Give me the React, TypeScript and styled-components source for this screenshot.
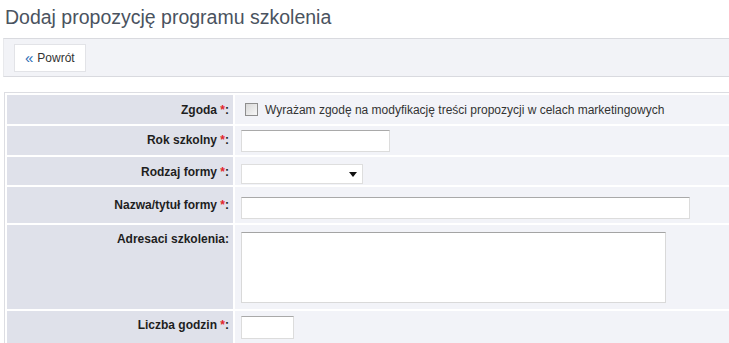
import React from 'react'
import styled, { createGlobalStyle } from 'styled-components'

const GlobalStyle = createGlobalStyle`
  html, body {
    margin: 0;
    padding: 0;
    background: #ffffff;
    overflow: hidden;
  }
  body {
    font-family: 'Liberation Sans', Arial, sans-serif;
    font-size: 12px;
    color: #222;
  }
`

const Page = styled.div`
  width: 729px;
  height: 343px;
  overflow: hidden;
`

const Title = styled.h1`
  margin: 0;
  padding: 5px 0 0 5px;
  height: 38px;
  box-sizing: border-box;
  font-size: 19.5px;
  line-height: 24px;
  font-weight: normal;
  color: #4a5360;
`

const Toolbar = styled.div`
  margin-left: 3px;
  height: 37px;
  display: flex;
  align-items: center;
  padding-left: 10px;
  background: #f2f3f7;
  border-top: 1px solid #d9dadf;
  border-bottom: 1px solid #d9dadf;
  border-left: 1px solid #e8e9ec;
`

const BackButton = styled.button`
  height: 28px;
  padding: 0 10px;
  display: flex;
  align-items: center;
  gap: 4px;
  background: #fff;
  border: 1px solid #e2e3e7;
  font-family: inherit;
  font-size: 12px;
  color: #333;
  cursor: pointer;
`

const Arrows = styled.span`
  color: #2b6cb5;
  font-size: 15px;
  line-height: 12px;
`

const FormTable = styled.div`
  margin: 15px 0 0 4px;
  width: 760px;
  border: 1px solid #dcdde2;
  border-right: none;
  padding: 2px 0 0 2px;
  display: grid;
  grid-template-columns: 226px 1fr;
  gap: 2px;
  background: #fff;
`

const Label = styled.div<{ $h: number; $pt: number }>`
  height: ${(p) => p.$h}px;
  box-sizing: border-box;
  padding: ${(p) => p.$pt}px 4px 0 0;
  background: #dfe1ea;
  text-align: right;
  font-weight: bold;
  line-height: 14px;
  color: #1e1e1e;
`

const Star = styled.span`
  color: #e3262b;
`

const Value = styled.div<{ $h: number; $pt: number }>`
  height: ${(p) => p.$h}px;
  box-sizing: border-box;
  padding: ${(p) => p.$pt}px 6px 0 6px;
  background: #f2f3f8;
  display: flex;
  align-items: flex-start;
`

const Check = styled.input`
  appearance: none;
  width: 13px;
  height: 13px;
  margin: 0 7px 0 4px;
  border: 1px solid #8e8e8e;
  background: linear-gradient(135deg, #d8d8d8, #f7f7f7);
  box-sizing: border-box;
`

const CheckText = styled.span`
  color: #333;
  line-height: 14px;
`

const TextInput = styled.input<{ $w: number; $hh?: number }>`
  width: ${(p) => p.$w}px;
  height: ${(p) => p.$hh ?? 22}px;
  box-sizing: border-box;
  margin: 0;
  border: 1px solid #dcdcdc;
  border-top-color: #a9a9a9;
  background: #fff;
  font-family: inherit;
  font-size: 12px;
`

const Area = styled.textarea`
  width: 425px;
  height: 71px;
  box-sizing: border-box;
  margin: 0;
  border: 1px solid #d9d9d9;
  border-top-color: #a4a4a4;
  background: #fff;
  resize: none;
`

const SelectWrap = styled.div`
  position: relative;
  width: 122px;
  height: 20px;
  &::after {
    content: '';
    position: absolute;
    right: 6px;
    top: 8px;
    border-left: 4px solid transparent;
    border-right: 4px solid transparent;
    border-top: 5px solid #111;
  }
`

const Select = styled.select`
  appearance: none;
  width: 100%;
  height: 100%;
  margin: 0;
  border: 1px solid #dedede;
  background: #fff;
  font-family: inherit;
  font-size: 12px;
`

type Row = {
  label: string
  required?: boolean
  h: number
  lpt: number
  vpt: number
  field: React.ReactNode
}

const rows: Row[] = [
  {
    label: 'Zgoda',
    required: true,
    h: 29,
    lpt: 8,
    vpt: 8,
    field: (
      <>
        <Check type="checkbox" />
        <CheckText>Wyrażam zgodę na modyfikację treści propozycji w celach marketingowych</CheckText>
      </>
    ),
  },
  { label: 'Rok szkolny', required: true, h: 29, lpt: 7, vpt: 4, field: <TextInput $w={149} /> },
  {
    label: 'Rodzaj formy',
    required: true,
    h: 28,
    lpt: 8,
    vpt: 7,
    field: (
      <SelectWrap>
        <Select>
          <option></option>
        </Select>
      </SelectWrap>
    ),
  },
  { label: 'Nazwa/tytuł formy', required: true, h: 36, lpt: 11, vpt: 10, field: <TextInput $w={449} /> },
  { label: 'Adresaci szkolenia', h: 84, lpt: 7, vpt: 7, field: <Area /> },
  { label: 'Liczba godzin', required: true, h: 40, lpt: 7, vpt: 5, field: <TextInput $w={53} $hh={23} /> },
]

export default function App() {
  return (
    <Page>
      <GlobalStyle />
      <Title>Dodaj propozycję programu szkolenia</Title>
      <Toolbar>
        <BackButton>
          <Arrows>«</Arrows>Powrót
        </BackButton>
      </Toolbar>
      <FormTable>
        {rows.map((r) => (
          <React.Fragment key={r.label}>
            <Label $h={r.h} $pt={r.lpt}>
              {r.label}
              {r.required && (
                <>
                  {' '}
                  <Star>*</Star>
                </>
              )}
              :
            </Label>
            <Value $h={r.h} $pt={r.vpt}>
              {r.field}
            </Value>
          </React.Fragment>
        ))}
      </FormTable>
    </Page>
  )
}
